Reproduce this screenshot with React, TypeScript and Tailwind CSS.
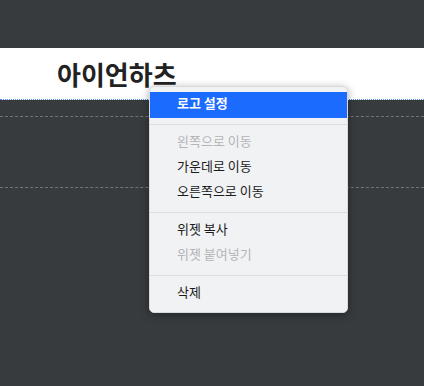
const font = { fontFamily: '"Noto Sans CJK KR", "Noto Sans", sans-serif' };

type Item = { label: string; disabled?: boolean; active?: boolean } | "sep";

const items: Item[] = [
  { label: "로고 설정", active: true },
  "sep",
  { label: "왼쪽으로 이동", disabled: true },
  { label: "가운데로 이동" },
  { label: "오른쪽으로 이동" },
  "sep",
  { label: "위젯 복사" },
  { label: "위젯 붙여넣기", disabled: true },
  "sep",
  { label: "삭제" },
];

function ContextMenu() {
  return (
    <div className="absolute left-[149px] top-[86px] w-[199px] rounded-[5px] border border-[#d9dadd] bg-[#f1f2f4] py-[5px] shadow-[0_2px_8px_rgba(0,0,0,0.35)]">
      {items.map((item, i) =>
        item === "sep" ? (
          <div key={i} className="my-[6px] h-px bg-[#dcdde0]" />
        ) : (
          <div
            key={i}
            className={
              item.active
                ? "flex h-[26px] items-center bg-[#1c6bff] pb-[4px] pl-[27px] text-[13px] font-bold text-white"
                : item.disabled
                  ? "flex h-[25px] items-center pb-[5px] pl-[27px] text-[13px] text-[#b4b5b8]"
                  : "flex h-[25px] items-center pb-[5px] pl-[27px] text-[13px] text-[#1b1b1b]"
            }
          >
            {item.label}
          </div>
        )
      )}
    </div>
  );
}

export default function App() {
  return (
    <div className="relative h-[386px] w-full overflow-hidden bg-[#373b3e]" style={font}>
      <div className="h-[48px]" />
      <div className="flex h-[52px] items-center border-b border-dotted border-[#4d86f0] bg-white pl-[57px]">
        <span className="text-[26px] font-semibold text-[#222]">아이언하츠</span>
      </div>
      <div className="h-[16px]" />
      <div className="h-[72px] border-y border-dashed border-[#70757a]" />
      <ContextMenu />
    </div>
  );
}
